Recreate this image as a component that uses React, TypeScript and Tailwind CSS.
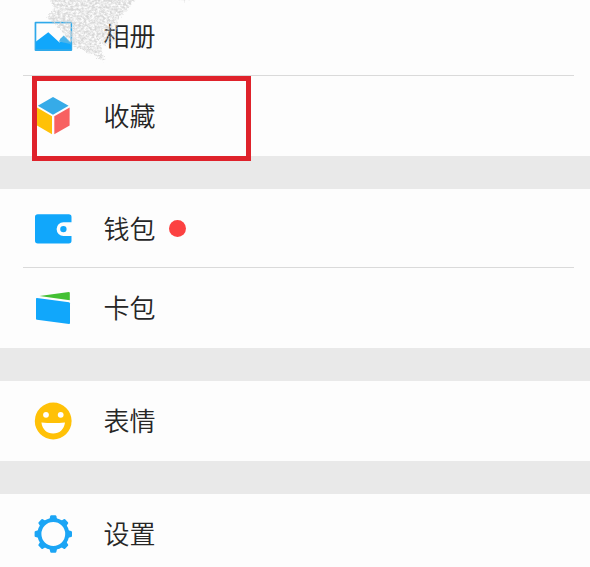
import type { ReactNode } from 'react'
import clsx from 'clsx'

function AlbumIcon() {
  return (
    <svg width="40" height="40" viewBox="0 0 40 40">
      <rect x="1.6" y="5.7" width="37.6" height="29.2" rx="1" fill="#2fa9ea" />
      <rect x="3.3" y="7.4" width="34.2" height="25" fill="#fdfdfd" />
      <path d="M3 25.5 L15.3 16.2 L26.5 26.6 L32 23 L38 27 V33 H3 Z" fill="#11a7fb" />
      <path d="M25.8 25.5 L27.5 22.5 L30.8 19.6 L37.6 26.5 V28 Z" fill="#4cb4ea" />
    </svg>
  )
}

function FavoritesIcon() {
  return (
    <svg width="40" height="40" viewBox="0 0 40 40">
      <path d="M20 .9 L35.6 9.7 L20 18.8 L4.8 9.7 Z" fill="#36abe8" />
      <path d="M4 11.6 L19 20.3 V38.3 L4 29.6 Z" fill="#ffc107" />
      <path d="M21.3 20.3 L36.6 11.6 V29.6 L21.3 38.3 Z" fill="#f86161" />
    </svg>
  )
}

function WalletIcon() {
  return (
    <svg width="40" height="40" viewBox="0 0 40 40">
      <path
        d="M4.8 5.3 H35.8 Q38.5 5.3 38.5 8 V13.3 H30.4 A6.8 6.8 0 0 0 30.4 26.9 H38.5 V31.8 Q38.5 34.5 35.8 34.5 H4.8 Q2 34.5 2 31.8 V8 Q2 5.3 4.8 5.3 Z"
        fill="#11a7fb"
      />
      <circle cx="30.4" cy="20.1" r="3.2" fill="#11a7fb" />
    </svg>
  )
}

function CardsIcon() {
  return (
    <svg width="40" height="40" viewBox="0 0 40 40">
      <path d="M6.5 8 L35.8 4 Q36.8 4 36.8 5 V12.2 Z" fill="#43c033" />
      <path d="M3 10.8 Q3 9.9 4 10 L36 14.2 Q37 14.4 37 15.4 V35 Q37 36.2 36 36.1 L4 31.8 Q3 31.6 3 30.7 Z" fill="#11a7fb" />
    </svg>
  )
}

function StickerIcon() {
  return (
    <svg width="40" height="40" viewBox="0 0 40 40">
      <circle cx="20.2" cy="20" r="18.4" fill="#ffc107" />
      <circle cx="13" cy="13.8" r="2.9" fill="#fff" />
      <circle cx="27.7" cy="13.8" r="2.9" fill="#fff" />
      <path d="M8.4 21.4 Q20.2 22.6 32 21.4 C31 28.5 26.5 32.4 20.2 32.4 C14 32.4 9.4 28.5 8.4 21.4 Z" fill="#fff" />
    </svg>
  )
}

function SettingsIcon() {
  return (
    <svg width="40" height="40" viewBox="0 0 40 40">
      <g fill="#1ba5f5">
        {[0, 45, 90, 135, 180, 225, 270, 315].map((angle) => (
          <path key={angle} d="M16.4 6 L17.2 2.2 Q17.4 1.3 18.3 1.3 H22.3 Q23.2 1.3 23.4 2.2 L24.2 6 Z" transform={`rotate(${angle} 20.3 20)`} />
        ))}
      </g>
      <circle cx="20.3" cy="20" r="13.9" fill="none" stroke="#1ba5f5" strokeWidth="4" />
    </svg>
  )
}

// Chalk-like scribble over the top of the list
function Scribble() {
  return (
    <svg className="pointer-events-none absolute left-0 top-0" width="200" height="64" viewBox="0 0 200 64">
      <defs>
        <filter id="chalk" x="-10%" y="-10%" width="120%" height="120%" colorInterpolationFilters="sRGB">
          <feTurbulence type="fractalNoise" baseFrequency="0.38 0.45" numOctaves="3" seed="8" result="noise" />
          <feColorMatrix in="noise" type="matrix" values="0 0 0 0 0.82  0 0 0 0 0.82  0 0 0 0 0.82  0 0 0 2.4 -0.65" result="grain" />
          <feDisplacementMap in="SourceGraphic" in2="noise" scale="6" xChannelSelector="R" yChannelSelector="G" result="shape" />
          <feComposite in="grain" in2="shape" operator="in" />
        </filter>
      </defs>
      <g filter="url(#chalk)">
        <path d="M50 -3 H137 L126 11 L122 15 L112 24 L108 32 L99 40 L105 61 L91 54 L72 45 L61 30 L46 17 L54 9 Z" fill="#ccc" fillOpacity="0.85" />
        <path d="M108 24 L119 18 L115 42 L104 46 L100 40 Z" fill="#ccc" fillOpacity="0.5" />
        <path d="M158 -3 H192 L190 1 L178 0 Z" fill="#ccc" fillOpacity="0.5" />
      </g>
      <g stroke="#fdfdfd" strokeOpacity="0.5" strokeWidth="1" strokeDasharray="9 3 4 5">
        <path d="M50 5 L112 38" />
        <path d="M62 2 L118 30" />
        <path d="M74 30 L104 48" />
        <path d="M76 38 L102 54" />
        <path d="M84 2 L124 20" />
      </g>
    </svg>
  )
}

type RowProps = {
  icon: ReactNode
  label: string
  dot?: boolean
  className?: string
}

function Row({ icon, label, dot, className = 'h-20' }: RowProps) {
  return (
    <div className={clsx('flex shrink-0 items-center pl-[33px]', className)}>
      {icon}
      <span className="ml-[30.5px] pb-[2px] text-[26px] leading-10 font-[350] text-[#262626]">{label}</span>
      {dot && <span className="ml-[13.5px] size-[17px] rounded-full bg-[#fc4141]" />}
    </div>
  )
}

function Divider() {
  return <div className="-mt-px ml-[23px] mr-4 h-px shrink-0 bg-[#dadada]" />
}

export default function App() {
  return (
    <main className="relative flex h-[567px] w-[590px] flex-col overflow-hidden bg-[#e9e9e9] font-['Noto_Sans_CJK_SC',sans-serif]">
      <section className="-mt-1 bg-[#fdfdfd]">
        <Row icon={<AlbumIcon />} label="相册" />
        <Divider />
        <Row icon={<FavoritesIcon />} label="收藏" />
      </section>

      <section className="mt-[33px] bg-[#fdfdfd]">
        <Row icon={<WalletIcon />} label="钱包" dot className="h-[79px]" />
        <Divider />
        <Row icon={<CardsIcon />} label="卡包" />
      </section>

      <section className="mt-[33px] bg-[#fdfdfd]">
        <Row icon={<StickerIcon />} label="表情" />
      </section>

      <section className="mt-[33px] bg-[#fdfdfd]">
        <Row icon={<SettingsIcon />} label="设置" />
      </section>

      <Scribble />
      <div className="absolute left-[32px] top-[76px] h-[85px] w-[219px] border-5 border-[#df222b]" />
    </main>
  )
}
